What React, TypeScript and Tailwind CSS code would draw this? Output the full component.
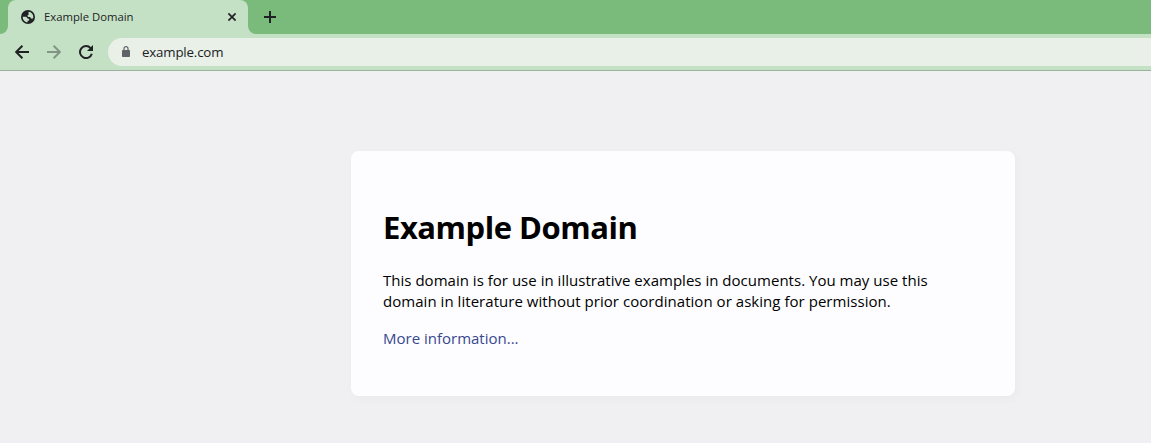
function Flare({ side }: { side: "left" | "right" }) {
  return (
    <svg width="8" height="8" viewBox="0 0 8 8" className="block shrink-0 self-end" fill="#c5e1c5">
      <path d={side === "left" ? "M8 0V8H0A8 8 0 0 0 8 0Z" : "M0 0V8H8A8 8 0 0 1 0 0Z"} />
    </svg>
  );
}

function Globe() {
  return (
    <svg width="14" height="14" viewBox="0 0 14 14" className="ml-px shrink-0">
      <circle cx="7" cy="7" r="7" fill="currentColor" />
      <path
        d="M7.6 1.7C10.4 2 12.3 4.3 12.3 7L12.1 8.3C11.4 8.9 10.4 8.8 9.8 8.2L9.1 7.1L7.3 6.9C6.4 6.5 6.3 5.5 6.9 5L8 4.3L7.4 3.3Z"
        fill="#c5e1c5"
      />
      <path
        d="M1.7 6.7H4.6C5.8 6.9 6.4 7.6 6.5 8.6L8.2 9L8.1 10.4L6.7 10.8L6.5 12.3C3.6 12 1.6 9.6 1.7 6.7Z"
        fill="#c5e1c5"
      />
    </svg>
  );
}

function TabStrip() {
  return (
    <div className="flex h-[34px] bg-[#7abb7c]">
      <Flare side="left" />
      <div className="flex w-[240px] items-center rounded-t-lg bg-[#c5e1c5] pl-3 pr-3 text-[#202124]">
        <Globe />
        <span className="ml-[9px] flex-1 whitespace-nowrap text-[11.3px] leading-4">Example Domain</span>
        <svg width="8" height="8" viewBox="0 0 8 8" className="shrink-0" stroke="currentColor" strokeWidth="1.7">
          <path d="M0.4 0.4L7.6 7.6M7.6 0.4L0.4 7.6" />
        </svg>
      </div>
      <Flare side="right" />
      <div className="flex items-center pl-2 text-[#202124]">
        <svg width="12" height="12" viewBox="0 0 12 12" stroke="currentColor" strokeWidth="2">
          <path d="M6 0V12M0 6H12" />
        </svg>
      </div>
    </div>
  );
}

function Toolbar() {
  return (
    <div className="flex h-[37px] border-b border-[#9ab29b] bg-[#c5e1c5] pt-1 text-[#202124]">
      <div className="flex h-7 w-[108px] shrink-0 items-center gap-[18px] pl-[15px]">
        <svg width="14" height="14" viewBox="0 0 14 14" fill="none" stroke="currentColor" strokeWidth="2">
          <path d="M14 7H1.5M7.4 0.7L1.1 7L7.4 13.3" />
        </svg>
        <svg width="14" height="14" viewBox="0 0 14 14" fill="none" stroke="#829584" strokeWidth="2">
          <path d="M0 7H12.5M6.6 0.7L12.9 7L6.6 13.3" />
        </svg>
        <svg width="14" height="14" viewBox="0 0 14 14" fill="none" stroke="currentColor" strokeWidth="2">
          <path d="M11.6 3.2A6 6 0 1 0 12.8 8.7" />
          <path d="M14 0V6H8Z" fill="currentColor" stroke="none" />
        </svg>
      </div>
      <div className="flex h-7 flex-1 items-center rounded-l-full bg-[#e8f0e8] pl-[14px]">
        <svg width="8" height="11" viewBox="0 0 8 11" className="-mt-px text-[#5f6368]">
          <rect y="4" width="8" height="7" rx="0.8" fill="currentColor" />
          <path d="M2 4.5V2.6A2 2 0 0 1 6 2.6V4.5" fill="none" stroke="currentColor" strokeWidth="1.2" />
        </svg>
        <span className="ml-3 text-[13.3px] leading-5 tracking-[-0.18px]">example.com</span>
      </div>
    </div>
  );
}

export default function App() {
  return (
    <div className="flex h-[443px] w-[1151px] flex-col overflow-hidden bg-[#f0f0f2] font-['Open_Sans','Noto_Sans',sans-serif]">
      <TabStrip />
      <Toolbar />
      <main className="ml-[351px] mt-20 h-[245px] w-[664px] rounded-lg bg-[#fdfdff] px-8 pt-[55px] text-black shadow-[2px_3px_7px_2px_rgba(0,0,0,0.02)]">
        <h1 className="text-[31px] font-bold leading-[43px] tracking-[-0.48px]">Example Domain</h1>
        <p className="mt-[21px] whitespace-nowrap text-[15px] leading-[21px] tracking-[0.02px]">
          <span>This domain is for use in illustrative examples in documents. You may use this</span>
          <br />
          <span className="tracking-[0.04px]">domain in literature without prior coordination or asking for permission.</span>
        </p>
        <a href="#" className="mt-4 block text-[15px] leading-[21px] text-[#38488f]">More information...</a>
      </main>
    </div>
  );
}
